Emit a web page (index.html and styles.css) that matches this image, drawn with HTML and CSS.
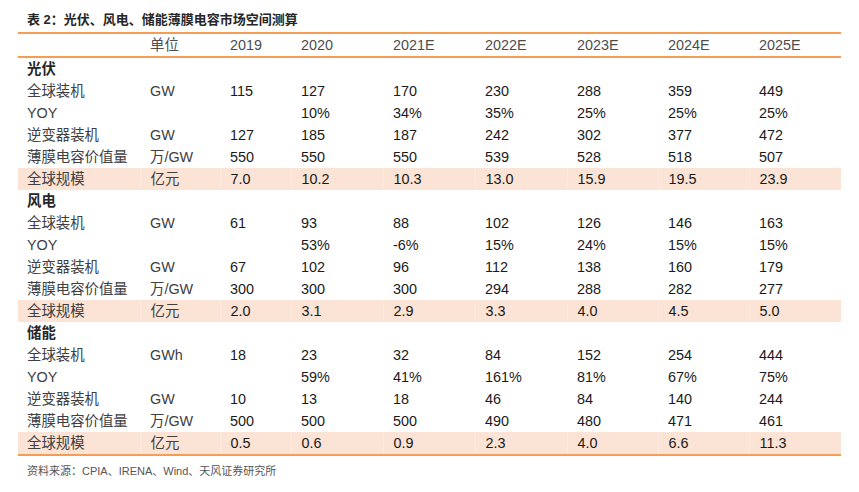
FILE: index.html
```html
<!DOCTYPE html>
<html lang="zh-CN">
<head>
<meta charset="utf-8">
<title>表 2</title>
<link rel="stylesheet" href="styles.css">
</head>
<body>
<div class="page">
  <div class="title">表 2：光伏、风电、储能薄膜电容市场空间测算</div>
  <table class="data">
    <colgroup>
      <col class="c-label"><col class="c-unit"><col class="c-2019"><col class="c-2020"><col class="c-e"><col class="c-e"><col class="c-e2"><col class="c-e2"><col class="c-e">
    </colgroup>
    <thead>
      <tr><th></th><th>单位</th><th>2019</th><th>2020</th><th>2021E</th><th>2022E</th><th>2023E</th><th>2024E</th><th>2025E</th></tr>
    </thead>
    <tbody>
      <tr class="cat"><td>光伏</td><td></td><td></td><td></td><td></td><td></td><td></td><td></td><td></td></tr>
      <tr><td>全球装机</td><td>GW</td><td>115</td><td>127</td><td>170</td><td>230</td><td>288</td><td>359</td><td>449</td></tr>
      <tr><td>YOY</td><td></td><td></td><td>10%</td><td>34%</td><td>35%</td><td>25%</td><td>25%</td><td>25%</td></tr>
      <tr><td>逆变器装机</td><td>GW</td><td>127</td><td>185</td><td>187</td><td>242</td><td>302</td><td>377</td><td>472</td></tr>
      <tr><td>薄膜电容价值量</td><td>万/GW</td><td>550</td><td>550</td><td>550</td><td>539</td><td>528</td><td>518</td><td>507</td></tr>
      <tr class="hl"><td>全球规模</td><td>亿元</td><td>7.0</td><td>10.2</td><td>10.3</td><td>13.0</td><td>15.9</td><td>19.5</td><td>23.9</td></tr>
      <tr class="cat"><td>风电</td><td></td><td></td><td></td><td></td><td></td><td></td><td></td><td></td></tr>
      <tr><td>全球装机</td><td>GW</td><td>61</td><td>93</td><td>88</td><td>102</td><td>126</td><td>146</td><td>163</td></tr>
      <tr><td>YOY</td><td></td><td></td><td>53%</td><td>-6%</td><td>15%</td><td>24%</td><td>15%</td><td>15%</td></tr>
      <tr><td>逆变器装机</td><td>GW</td><td>67</td><td>102</td><td>96</td><td>112</td><td>138</td><td>160</td><td>179</td></tr>
      <tr><td>薄膜电容价值量</td><td>万/GW</td><td>300</td><td>300</td><td>300</td><td>294</td><td>288</td><td>282</td><td>277</td></tr>
      <tr class="hl"><td>全球规模</td><td>亿元</td><td>2.0</td><td>3.1</td><td>2.9</td><td>3.3</td><td>4.0</td><td>4.5</td><td>5.0</td></tr>
      <tr class="cat"><td>储能</td><td></td><td></td><td></td><td></td><td></td><td></td><td></td><td></td></tr>
      <tr><td>全球装机</td><td>GWh</td><td>18</td><td>23</td><td>32</td><td>84</td><td>152</td><td>254</td><td>444</td></tr>
      <tr><td>YOY</td><td></td><td></td><td>59%</td><td>41%</td><td>161%</td><td>81%</td><td>67%</td><td>75%</td></tr>
      <tr><td>逆变器装机</td><td>GW</td><td>10</td><td>13</td><td>18</td><td>46</td><td>84</td><td>140</td><td>244</td></tr>
      <tr><td>薄膜电容价值量</td><td>万/GW</td><td>500</td><td>500</td><td>500</td><td>490</td><td>480</td><td>471</td><td>461</td></tr>
      <tr class="hl last"><td>全球规模</td><td>亿元</td><td>0.5</td><td>0.6</td><td>0.9</td><td>2.3</td><td>4.0</td><td>6.6</td><td>11.3</td></tr>
    </tbody>
  </table>
  <div class="source">资料来源：CPIA、IRENA、Wind、天风证券研究所</div>
</div>
</body>
</html>
```

FILE: styles.css
```css
html, body {
  margin: 0;
  padding: 0;
  background: #ffffff;
}

body {
  font-family: "Liberation Sans", "Noto Sans CJK SC", sans-serif;
  color: #1a1a1a;
}

.page {
  padding: 11px 19px 0 18px;
  width: 822px;
}

.title {
  font-size: 13px;
  font-weight: bold;
  color: #262626;
  padding-left: 9px;
  line-height: 17px;
  height: 21px;
}

.data {
  width: 822px;
  table-layout: fixed;
  border-collapse: collapse;
  font-size: 14.4px;
}

.c-label { width: 122px; }
.c-unit { width: 80px; }
.c-2019 { width: 71px; }
.c-2020 { width: 92px; }
.c-e { width: 92px; }
.c-e2 { width: 91px; }

.data thead tr {
  border-top: 2px solid #f39d55;
  border-bottom: 2px solid #f39d55;
}

.data th {
  height: 21px;
  padding: 1px 0 0 10px;
  font-weight: normal;
  text-align: left;
  color: #4d4d4d;
  line-height: 21px;
}

.data td {
  height: 22px;
  padding: 0 0 0 10px;
  line-height: 22px;
  text-align: left;
  white-space: nowrap;
  color: #1a1a1a;
}

.data td:first-child {
  padding-left: 9px;
  color: #404040;
}

.data td:nth-child(2) {
  color: #404040;
}

.data tr.cat td:first-child {
  font-weight: bold;
  color: #262626;
}

.data tr.hl td {
  background: #fbe3d5;
}

.data tr.hl td + td {
  border-left: 1px solid #fce9df;
}

.data tr.last {
  border-bottom: 2px solid #f39d55;
}

.source {
  font-size: 11px;
  color: #555555;
  padding-left: 9px;
  margin-top: 7px;
  line-height: 16px;
}
```
